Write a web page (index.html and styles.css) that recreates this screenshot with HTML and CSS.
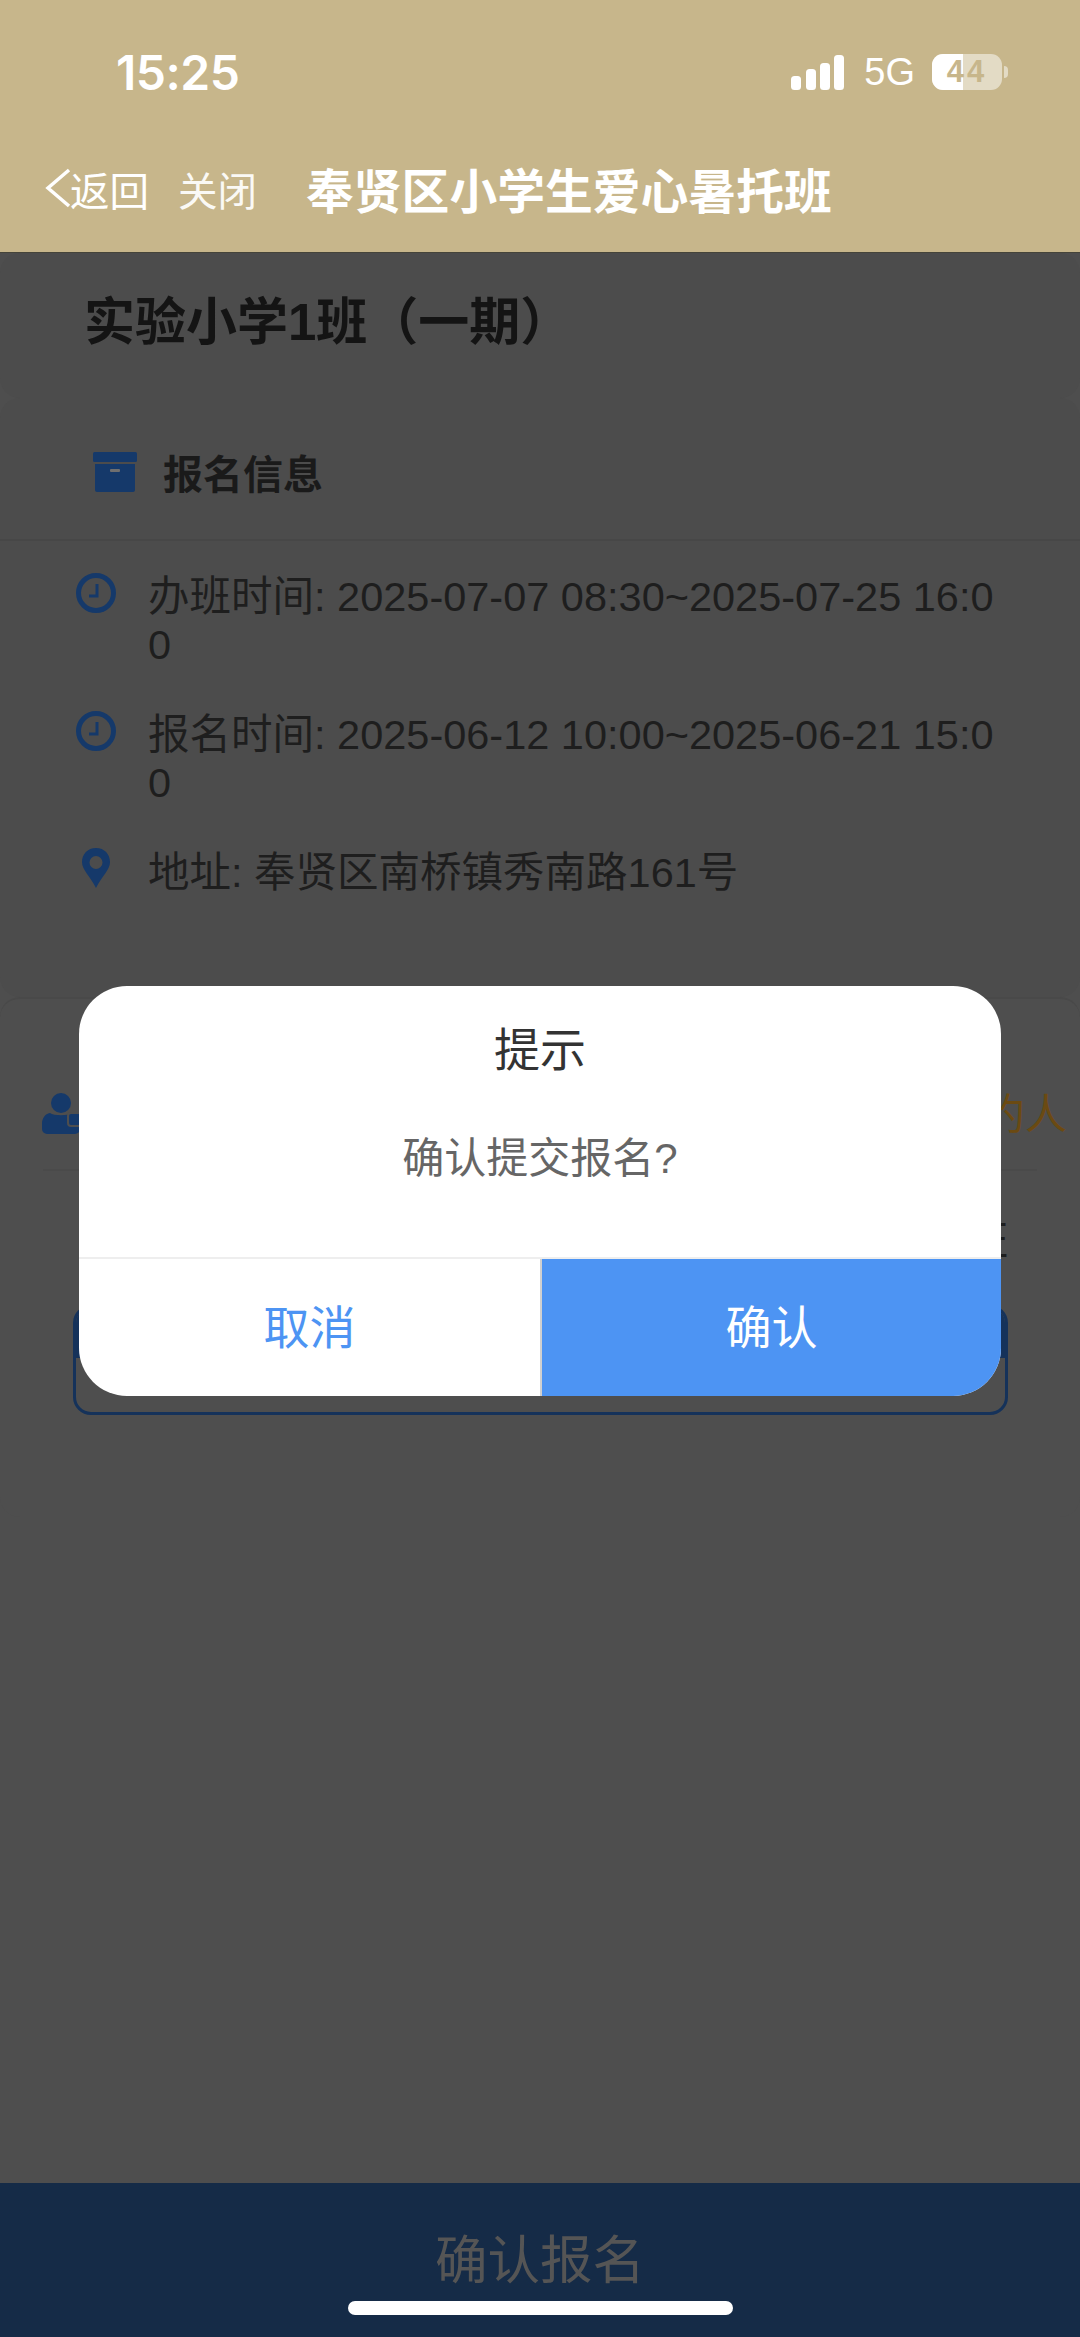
FILE: index.html
```html
<!DOCTYPE html>
<html lang="zh-CN">
<head>
  <title>奉贤区小学生爱心暑托班</title>
  <meta charset="utf-8">
  <meta name="viewport" content="width=device-width, initial-scale=1">
  <link rel="stylesheet" href="styles.css">
</head>
<body>

<header class="top">
  <div class="status">
    <span class="clock">15:25</span>
    <div class="status-right">
      <svg class="signal" width="53" height="35" viewBox="0 0 53 35" fill="#fff">
        <rect x="0" y="21" width="10" height="14" rx="3.500"/>
        <rect x="15" y="14" width="10" height="21" rx="3.500"/>
        <rect x="29" y="8" width="10" height="27" rx="3.500"/>
        <rect x="43" y="0" width="10" height="35" rx="3.500"/>
      </svg>
      <span class="net">5G</span>
      <div class="battery">
        <div class="battery-fill" style="width:44%"></div>
        <span class="battery-num">44</span>
      </div>
      <div class="battery-nub"></div>
    </div>
  </div>
  <nav class="nav">
    <svg class="back" width="26" height="40" viewBox="0 0 26 40" fill="none" stroke="#fff" stroke-width="3.500">
      <path d="M24 2 L3 20 L24 38"/>
    </svg>
    <span class="nav-link">返回</span>
    <span class="nav-link nav-close">关闭</span>
    <span class="nav-title">奉贤区小学生爱心暑托班</span>
  </nav>
</header>

<main class="page">
  <section class="card title-card">
    <h1>实验小学1班（一期）</h1>
  </section>

  <section class="card">
    <div class="card-head">
      <svg class="box-icon" width="44" height="40" viewBox="0 0 44 40" fill="#15396a">
        <rect x="0" y="0" width="44" height="10" rx="1.500"/>
        <path d="M2 12 H42 V38 a2 2 0 0 1 -2 2 H4 a2 2 0 0 1 -2 -2 Z"/>
        <rect x="17" y="17" width="10" height="3" rx="1" fill="#6f6f6f"/>
      </svg>
      <h2>报名信息</h2>
    </div>
    <ul class="info">
      <li>
        <svg class="row-icon" width="40" height="40" viewBox="0 0 40 40" fill="none" stroke="#15396a">
          <circle cx="20" cy="20" r="17.500" stroke-width="5"/>
          <path d="M21 11 V23 H13" stroke-width="3"/>
        </svg>
        <p>办班时间: 2025-07-07 08:30~2025-07-25 16:00</p>
      </li>
      <li>
        <svg class="row-icon" width="40" height="40" viewBox="0 0 40 40" fill="none" stroke="#15396a">
          <circle cx="20" cy="20" r="17.500" stroke-width="5"/>
          <path d="M21 11 V23 H13" stroke-width="3"/>
        </svg>
        <p>报名时间: 2025-06-12 10:00~2025-06-21 15:00</p>
      </li>
      <li>
        <svg class="row-icon pin-icon" width="40" height="40" viewBox="0 0 40 40" fill="#15396a">
          <path fill-rule="evenodd" d="M20 0 C11.500 0 6 6.300 6 14 C6 22 14 28 20 40 C26 28 34 22 34 14 C34 6.300 28.500 0 20 0 Z M20 8 a6.500 6.500 0 1 1 0 13 a6.500 6.500 0 0 1 0 -13 Z"/>
        </svg>
        <p>地址: 奉贤区南桥镇秀南路161号</p>
      </li>
    </ul>
  </section>

  <section class="card person-card">
    <div class="person-head">
      <svg class="person-icon" width="42" height="42" viewBox="0 0 42 42" fill="#15396a">
        <circle cx="19" cy="11" r="10"/>
        <path d="M8 21 C12 24 26 24 30 21 C35 22 38 26 38 32 V37 a5 5 0 0 1 -5 5 H5 a5 5 0 0 1 -5 -5 V32 C0 26 3 22 8 21 Z"/>
        <rect x="26" y="21" width="18" height="13" rx="3" stroke="#4e4e4e" stroke-width="2"/>
      </svg>
      <span class="person-name">报名学生</span>
      <span class="person-link">添加预约人</span>
    </div>
    <div class="person-row">学生身份证</div>
    <div class="person-box">
      <div class="person-box-bar"></div>
    </div>
  </section>
</main>

<footer class="submit">
  <span class="submit-text">确认报名</span>
  <div class="home-bar"></div>
</footer>

<!-- confirm dialog -->
<div class="dialog">
  <div class="dialog-title">提示</div>
  <div class="dialog-msg">确认提交报名?</div>
  <div class="dialog-btns">
    <div class="btn btn-cancel">取消</div>
    <div class="btn btn-ok">确认</div>
  </div>
</div>

</body>
</html>
```

FILE: styles.css
```css
* {
  box-sizing: border-box;
}

html, body {
  margin: 0;
  padding: 0;
}

body {
  position: relative;
  width: 1080px;
  height: 2337px;
  display: flex;
  flex-direction: column;
  overflow: hidden;
  background: #4e4e4e;
  font-family: "Liberation Sans", "Noto Sans CJK SC", sans-serif;
  color: #1e1e1e;
}

h1, h2, p, ul {
  margin: 0;
  padding: 0;
}

/* gold top area */
.top {
  height: 253px;
  background: #c7b68b;
  border-bottom: 1px solid #45443a;
  color: #fff;
}

.status {
  height: 144px;
  padding: 0 72px 0 116px;
  display: flex;
  align-items: center;
  justify-content: space-between;
}

.clock {
  font-family: "Inter", "Liberation Sans", sans-serif;
  font-size: 48px;
  font-weight: 600;
  letter-spacing: -0.5px;
}

.status-right {
  display: flex;
  align-items: center;
}

.net {
  margin-left: 20px;
  margin-right: 17px;
  font-size: 38px;
}

.battery {
  position: relative;
  width: 70px;
  height: 36px;
  border-radius: 11px;
  background: rgba(255, 255, 255, 0.5);
  text-align: center;
}

.battery-fill {
  position: absolute;
  left: 0;
  top: 0;
  bottom: 0;
  border-radius: 11px 0 0 11px;
  background: #fff;
}

.battery-num {
  position: relative;
  display: block;
  font-size: 31px;
  line-height: 36px;
  font-weight: bold;
  letter-spacing: 3px;
  color: #c7b68b;
}

.battery-nub {
  width: 4px;
  height: 12px;
  margin-left: 2px;
  border-radius: 0 4px 4px 0;
  background: rgba(255, 255, 255, 0.5);
}

.nav {
  height: 88px;
  padding-left: 45px;
  display: flex;
  align-items: center;
}

.nav-link {
  font-size: 39.500px;
}

.back {
  margin-right: -1px;
}

.nav-close {
  margin-left: 29px;
  opacity: 0.92;
}

.nav-title {
  margin-left: 49px;
  font-size: 47.800px;
  font-weight: bold;
  white-space: nowrap;
}

/* page content */
.page {
  flex: 1;
}

.card {
  background: #4c4c4c;
  border-radius: 20px;
}

.title-card {
  height: 145px;
  padding-left: 84px;
  padding-bottom: 16px;
  display: flex;
  align-items: center;
}

.title-card h1 {
  font-size: 51px;
  color: #141414;
}

.card-head {
  height: 143px;
  padding-left: 93px;
  padding-top: 6px;
  display: flex;
  align-items: center;
  border-bottom: 2px solid #474747;
}

.card-head h2 {
  margin-left: 26px;
  font-size: 40px;
  color: #1a1a1a;
}

.info {
  list-style: none;
  padding: 30px 76px 100px 76px;
  display: flex;
  flex-direction: column;
  gap: 40px;
}

.info li {
  display: flex;
  align-items: flex-start;
}

.row-icon {
  flex: none;
  margin-top: 2px;
}

.pin-icon {
  margin-top: 1px;
}

.info p {
  margin-top: 2px;
  margin-left: 32px;
  width: 860px;
  font-size: 41.500px;
  line-height: 48px;
  word-break: break-all;
}

.person-card {
  height: 520px;
  border-top: 2px solid #494949;
  padding-top: 90px;
  background: #4e4e4e;
}

.person-head {
  height: 82px;
  margin: 0 43px;
  padding-top: 5px;
  padding-bottom: 37px;
  display: flex;
  align-items: center;
  border-bottom: 2px solid #4a4a4a;
}

.person-icon {
  flex: none;
  margin-left: -1px;
}

.person-name {
  margin-left: 10px;
  font-size: 42px;
  font-weight: bold;
}

.person-link {
  margin-left: auto;
  margin-right: -30px;
  margin-top: -6px;
  font-size: 42px;
  color: #6b4a12;
}

.person-row {
  padding: 46px 72px 0 0;
  text-align: right;
  font-size: 42px;
  line-height: 48px;
}

.person-box {
  margin: 40px 72px 0 73px;
  height: 110px;
  border: 3px solid #15325a;
  border-radius: 18px;
  overflow: hidden;
}

.person-box-bar {
  height: 50px;
  background: #15325a;
}

/* bottom button */
.submit {
  position: relative;
  height: 154px;
  background: #152b47;
  text-align: center;
}

.submit-text {
  display: block;
  padding-top: 46px;
  font-size: 52.500px;
  line-height: 64px;
  color: #555;
}

.home-bar {
  position: absolute;
  left: 348px;
  bottom: 22px;
  width: 385px;
  height: 14px;
  border-radius: 7px;
  background: #fff;
}

/* dialog, sits above the page */
.dialog {
  position: absolute;
  left: 79px;
  top: 986px;
  width: 922px;
  height: 410px;
  border-radius: 48px;
  overflow: hidden;
  display: flex;
  flex-direction: column;
  background: #fff;
  text-align: center;
}

.dialog-title {
  padding-top: 34px;
  font-size: 46px;
  line-height: 60px;
  color: #333;
}

.dialog-msg {
  padding-top: 49px;
  font-size: 42px;
  line-height: 60px;
  color: #666;
}

.dialog-btns {
  margin-top: auto;
  height: 139px;
  display: flex;
  border-top: 2px solid #eee;
}

.btn {
  font-size: 46px;
  line-height: 138px;
}

.btn-cancel {
  width: 463px;
  color: #4d94f3;
  border-right: 2px solid #d0d0d0;
}

.btn-ok {
  flex: 1;
  color: #fff;
  background: #4d94f3;
}
```
